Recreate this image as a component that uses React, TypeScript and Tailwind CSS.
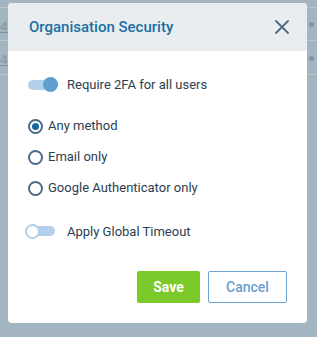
import React, { useState } from 'react';

function Toggle({ on }: { on: boolean }) {
  return (
    <div className="relative w-[30px] h-[15px] flex items-center shrink-0">
      <div className="w-full h-[10px] rounded-full bg-[#b3d0ea]" />
      {on ? (
        <div className="absolute right-0 top-0 w-[15px] h-[15px] rounded-full bg-[#5f9fd0]" />
      ) : (
        <div className="absolute left-0 top-0 w-[15px] h-[15px] rounded-full bg-white border-2 border-[#b3d0ea]" />
      )}
    </div>
  );
}

function Radio({ checked, label, onClick }: { checked: boolean; label: string; onClick: () => void }) {
  return (
    <button onClick={onClick} className="flex items-center gap-[5px] h-[31px] text-left">
      <span className="w-[15px] h-[15px] rounded-full border-2 border-[#4a6a88] flex items-center justify-center">
        {checked && <span className="w-[7px] h-[7px] rounded-full bg-[#0f6b9e]" />}
      </span>
      <span className="text-[13px] text-[#2c3e50]">{label}</span>
    </button>
  );
}

function Backdrop() {
  return (
    <div className="absolute inset-0 bg-[#a3b5c1]">
      {[7, 40, 74].map((y) => (
        <div key={y} className="absolute left-0 right-0 h-px bg-[#b7c6d0]" style={{ top: y }} />
      ))}
      <span className="absolute left-0 top-[17px] text-[13px] text-[#7f95a5] underline">49</span>
      <span className="absolute left-0 top-[50px] text-[13px] text-[#7f95a5] underline">49</span>
      <span className="absolute left-[309px] top-[22px] w-[5px] h-[5px] rounded-full bg-[#7f95a5]" />
      <span className="absolute left-[309px] top-[56px] w-[5px] h-[5px] rounded-full bg-[#7f95a5]" />
    </div>
  );
}

export default function App() {
  const [method, setMethod] = useState('any');
  const options = [
    { id: 'any', label: 'Any method' },
    { id: 'email', label: 'Email only' },
    { id: 'google', label: 'Google Authenticator only' },
  ];

  return (
    <div className="relative w-[317px] h-[337px] overflow-hidden" style={{ fontFamily: 'Roboto, sans-serif' }}>
      <Backdrop />
      <div className="absolute left-[8px] top-[3px] w-[299px] h-[320px] bg-white rounded-[4px] overflow-hidden flex flex-col">
        <div className="h-[48px] bg-[#e9edf0] flex items-center justify-between pl-[21px] pr-[18px]">
          <h2 className="text-[15px] font-medium text-[#1b6fa2]">Organisation Security</h2>
          <svg width="14" height="14" viewBox="0 0 14 14" className="text-[#4d6a84]">
            <path d="M1 1 L13 13 M13 1 L1 13" stroke="currentColor" strokeWidth="1.8" strokeLinecap="round" />
          </svg>
        </div>
        <div className="flex flex-col px-[20px] pt-[24px]">
          <div className="flex items-center gap-[9px]">
            <Toggle on />
            <span className="text-[13px] text-[#2c3e50]">Require 2FA for all users</span>
          </div>
          <div className="flex flex-col mt-[16px]">
            {options.map((o) => (
              <Radio key={o.id} checked={method === o.id} label={o.label} onClick={() => setMethod(o.id)} />
            ))}
          </div>
          <div className="flex items-center gap-[12px] mt-[18px] -ml-[3px]">
            <Toggle on={false} />
            <span className="text-[13px] text-[#2c3e50]">Apply Global Timeout</span>
          </div>
          <div className="flex justify-end gap-[8px] mt-[30px]">
            <button className="w-[63px] h-[32px] rounded-[2px] bg-[#7bc92a] text-white text-[14px] font-bold">Save</button>
            <button className="w-[79px] h-[32px] rounded-[2px] border border-[#6ea3d3] text-[#6a9fcd] text-[14px] font-medium">Cancel</button>
          </div>
        </div>
      </div>
    </div>
  );
}
